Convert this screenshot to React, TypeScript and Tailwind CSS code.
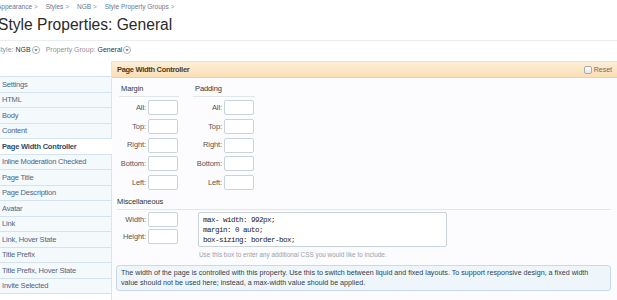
import React from 'react';

const sans = { fontFamily: '"Liberation Sans", Arial, sans-serif' };

const navItems = [
  'Settings',
  'HTML',
  'Body',
  'Content',
  'Page Width Controller',
  'Inline Moderation Checked',
  'Page Title',
  'Page Description',
  'Avatar',
  'Link',
  'Link, Hover State',
  'Title Prefix',
  'Title Prefix, Hover State',
  'Invite Selected',
];

const crumbs = ['Appearance', 'Styles', 'NGB', 'Style Property Groups'];

const sides = ['All:', 'Top:', 'Right:', 'Bottom:', 'Left:'];

function Chevron() {
  return (
    <svg width="8" height="8" viewBox="0 0 9 9" className="ml-[1px] inline-block">
      <circle cx="4.5" cy="4.5" r="4" fill="#fff" stroke="#8c97a3" strokeWidth="0.8" />
      <path d="M2.6 3.6 L6.4 3.6 L4.5 5.9 Z" fill="#5b6570" />
    </svg>
  );
}

function Box() {
  return <div className="h-[15px] w-[30px] rounded-[2px] border border-[#c9d3dc] bg-white" />;
}

function Label({ text }: { text: string }) {
  return <span className="text-[7.5px] tracking-[-0.1px] text-[#555]">{text}</span>;
}

function SideGroup({ title, width }: { title: string; width: string }) {
  return (
    <div className={width}>
      <div className="ml-[2px] text-[7.5px] leading-[10px] tracking-[-0.1px] text-[#333]">{title}</div>
      <div className="mt-[2px] h-px w-full bg-[#e1e6eb]" />
      <div className="mt-[3px] flex flex-col gap-[3.75px]">
        {sides.map((s) => (
          <div key={s} className="flex items-center justify-end gap-[2px] pr-[1px]">
            <Label text={s} />
            <Box />
          </div>
        ))}
      </div>
    </div>
  );
}

export default function App() {
  return (
    <div className="relative h-[300px] w-[617px] overflow-hidden bg-white" style={sans}>
      <div className="-ml-[3px] flex gap-[8px] pt-[2px] text-[6.5px] leading-[10px] text-[#5f7894]">
        {crumbs.map((c) => (
          <span key={c}>
            {c} <span className="text-[#8a9aab]">&gt;</span>
          </span>
        ))}
      </div>
      <div className="-ml-[2px] mt-[2px] text-[15.6px] leading-[22px] text-[#2a2a2a]">Style Properties: General</div>
      <div className="mt-[4px] h-px w-full bg-[#e9eef3]" />
      <div className="-ml-[4px] mt-[4px] flex items-center text-[7px] leading-[10px]">
        <span className="text-[#8a95a0]">Style:</span>
        <span className="ml-[2px] text-[#333]">NGB</span>
        <Chevron />
        <span className="ml-[6px] text-[#8a95a0]">Property Group:</span>
        <span className="ml-[2px] text-[#333]">General</span>
        <Chevron />
      </div>

      <div className="mt-[6px] flex">
        <div className="w-[112px] shrink-0 pt-[15px]">
          <div className="border-t border-[#d4e3ef]">
            {navItems.map((item) => {
              const active = item === 'Page Width Controller';
              return (
                <div
                  key={item}
                  className={`flex h-[15.5px] items-center border-b border-[#d4e3ef] pl-[2px] text-[7.5px] tracking-[-0.2px] ${
                    active
                      ? 'relative z-10 bg-white font-bold text-[#2c4a68]'
                      : 'border-r bg-[#f4f9fc] text-[#4c6784]'
                  }`}
                >
                  {item}
                </div>
              );
            })}
          </div>
        </div>

        <div className="-ml-px h-[250px] flex-1 border-l border-t border-[#dde4ea] bg-[#fcfcfe]">
          <div className="flex h-[16px] items-center justify-between border-b border-[#f2cf9d] bg-gradient-to-b from-[#fdeed6] to-[#fbdfb6] pl-[5px] pr-[5px]">
            <span className="text-[7.5px] font-bold tracking-[-0.3px] text-[#4a3a25]">Page Width Controller</span>
            <span className="flex items-center gap-[2px] pt-[1px] text-[7px] text-[#6f6a62]">
              <span className="h-[8px] w-[8px] rounded-[2px] border border-[#a9a9a9] bg-gradient-to-b from-white to-[#e6e6e6]" />
              Reset
            </span>
          </div>

          <div className="pl-[5px] pr-[6px]">
            <div className="mt-[6px] flex gap-[14px] pl-[2px]">
              <SideGroup title="Margin" width="w-[60px]" />
              <SideGroup title="Padding" width="w-[62px]" />
            </div>

            <div className="mt-[7px] text-[7.5px] leading-[10px] tracking-[-0.1px] text-[#333]">Miscellaneous</div>
            <div className="mt-[2px] h-px w-full bg-[#e1e6eb]" />

            <div className="mt-[2px] flex">
              <div className="flex w-[62px] flex-col gap-[2px] pr-[1px]">
                <div className="flex items-center justify-end gap-[2px]">
                  <Label text="Width:" />
                  <Box />
                </div>
                <div className="flex items-center justify-end gap-[2px]">
                  <Label text="Height:" />
                  <Box />
                </div>
              </div>
              <div className="ml-[19px]">
                <div
                  className="h-[35px] w-[249px] rounded-[2px] border border-[#c9d3dc] bg-white px-[4px] pt-[2px] text-[7.5px] leading-[10px] tracking-[-0.5px] text-[#222]"
                  style={{ fontFamily: '"Liberation Mono", monospace' }}
                >
                  max- width: 992px;
                  <br />
                  margin: 0 auto;
                  <br />
                  box-sizing: border-box;
                </div>
                <div className="mt-[4px] pl-[1px] text-[6.4px] leading-[8px] text-[#9aa3ac]">
                  Use this box to enter any additional CSS you would like to include.
                </div>
              </div>
            </div>

            <div className="-ml-px mt-[6px] rounded-[3px] border border-[#c5dbe9] bg-[#eef6fb] px-[4px] py-[2px] text-[7.15px] leading-[10px] text-[#2f3f4f]">
              The width of the page is controlled with this property. Use this to switch between liquid and fixed layouts. To support responsive design, a fixed width
              <br />
              value should not be used here; instead, a max-width value should be applied.
            </div>
          </div>
        </div>
      </div>
    </div>
  );
}
